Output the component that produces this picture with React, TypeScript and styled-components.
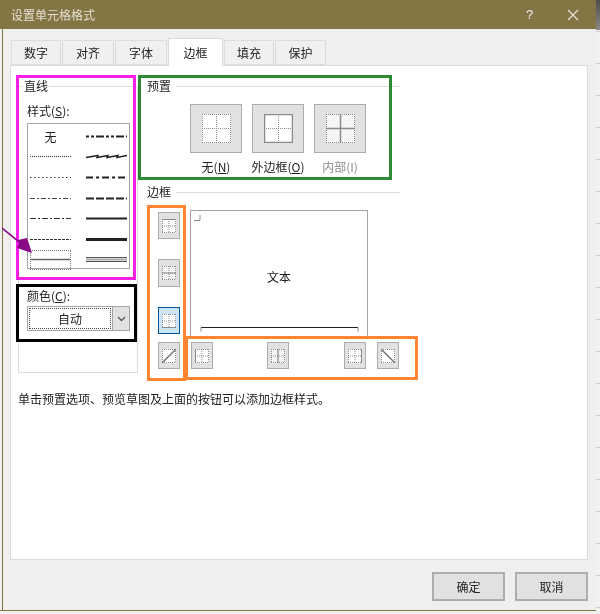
import React from "react";
import styled, { createGlobalStyle } from "styled-components";

const Global = createGlobalStyle`
  html, body { margin: 0; padding: 0; background: #e6e6e6; }
  * { box-sizing: border-box; }
`;

const Page = styled.div`
  position: relative;
  width: 600px;
  height: 614px;
  overflow: hidden;
  background: repeating-linear-gradient(180deg, #f1f1f1 0 31px, #cfcfcf 31px 32px);
  font-family: "Noto Sans CJK SC", "Noto Sans", sans-serif;
  font-size: 12px;
  color: #222;
  filter: blur(0.3px);
`;

const DarkEdge = styled.div`
  position: absolute;
  right: 0;
  top: 0;
  width: 4px;
  height: 30px;
  background: linear-gradient(180deg, #4d4d4d, #8a8a8a);
`;

const Dialog = styled.div`
  width: 596px;
  height: 611px;
  display: flex;
  flex-direction: column;
  background: #efefef;
  border-bottom: 1px solid #847545;
`;

const TitleBar = styled.div`
  height: 29px;
  flex: none;
  display: flex;
  align-items: center;
  padding: 0 17px 0 11px;
  background: #847545;
  color: #e4e0d2;
  font-size: 12px;
`;

const TitleText = styled.span`
  flex: 1;
`;

const Help = styled.span`
  width: 41px;
  font-size: 13px;
  font-family: "Liberation Sans", sans-serif;
  color: #eee;
`;

const Body = styled.div`
  flex: 1;
  display: flex;
  flex-direction: column;
  margin-left: 2px;
  padding: 0 8px 0 7px;
  border-left: 1px solid #847545;
`;

const Tabs = styled.div`
  display: flex;
  align-items: flex-end;
  height: 36px;
  padding-left: 1px;
  gap: 1px;
`;

const Tab = styled.div<{ $w: number; $active?: boolean }>`
  width: ${(p) => p.$w}px;
  height: ${(p) => (p.$active ? 28 : 25)}px;
  margin-bottom: ${(p) => (p.$active ? -1 : 0)}px;
  position: relative;
  display: flex;
  align-items: center;
  justify-content: center;
  background: ${(p) => (p.$active ? "#fff" : "#f0f0f0")};
  border: 1px solid #dcdcdc;
  border-bottom: ${(p) => (p.$active ? "none" : "1px solid #dcdcdc")};
  font-size: 12px;
`;

const Panel = styled.div`
  width: 578px;
  height: 495px;
  display: flex;
  flex-direction: column;
  padding: 12px 0 0 7px;
  background: #fff;
  border: 1px solid #dcdcdc;
`;

const Top = styled.div`
  display: flex;
`;

const LineGroup = styled.fieldset`
  width: 120px;
  height: 295px;
  margin: 0;
  padding: 0 6px 0 8px;
  border: 1px solid #dcdcdc;
  min-width: 0;
`;

const GroupLegend = styled.legend`
  margin-left: -4px;
  padding: 0 1px;
  line-height: 16px;
`;

const FieldLabel = styled.div`
  height: 16px;
  line-height: 16px;
  margin-top: 9px;
  margin-bottom: 4px;
`;

const ColorLabel = styled(FieldLabel)`
  margin-top: 19px;
  margin-bottom: 2px;
`;

const Underlined = styled.span`
  text-decoration: underline;
`;

const StyleList = styled.div`
  width: 103px;
  height: 146px;
  padding: 2px 2px;
  display: grid;
  grid-template-columns: 41px 41px;
  column-gap: 15px;
  grid-auto-rows: 20.6px;
  border: 1px solid #a5a5a5;
`;

const StyleCell = styled.div<{ $selected?: boolean }>`
  display: flex;
  align-items: center;
  justify-content: center;
  ${(p) => p.$selected && "border: 1px dotted #777;"}
`;

const ColorSelect = styled.div`
  width: 103px;
  height: 25px;
  display: flex;
  border: 1px solid #a5a5a5;
`;

const ColorValue = styled.div`
  flex: 1;
  margin: 1px;
  display: flex;
  align-items: center;
  justify-content: center;
  border: 1px dotted #444;
`;

const Arrow = styled.div`
  width: 17px;
  display: flex;
  align-items: center;
  justify-content: center;
  background: #e1e1e1;
  border-left: 1px solid #a5a5a5;
`;

const Right = styled.div`
  width: 253px;
  margin-left: 9px;
`;

const GroupHead = styled.div`
  display: flex;
  align-items: center;
  gap: 5px;
  height: 16px;
  line-height: 16px;
`;

const HeadRule = styled.div`
  flex: 1;
  height: 1px;
  background: #dcdcdc;
`;

const Presets = styled.div`
  display: flex;
  gap: 10px;
  margin: 10px 0 9px 43px;
`;

const Preset = styled.div<{ $muted?: boolean }>`
  width: 52px;
  display: flex;
  flex-direction: column;
  align-items: center;
  gap: 6px;
  white-space: nowrap;
  color: ${(p) => (p.$muted ? "#8a8a8a" : "#222")};
`;

const PresetButton = styled.div`
  width: 52px;
  height: 49px;
  display: flex;
  align-items: center;
  justify-content: center;
  background: #e1e1e1;
  border: 1px solid #adadad;
`;

const PresetLabel = styled.div`
  height: 16px;
  line-height: 16px;
`;

const Editor = styled.div`
  display: grid;
  grid-template-columns: 22px 178px;
  grid-template-rows: 132px 27px;
  column-gap: 10px;
  margin: 10px 0 0 11px;
`;

const SideButtons = styled.div`
  display: flex;
  flex-direction: column;
  padding-top: 2px;
  gap: 20px;
`;

const EdgeButton = styled.div<{ $active?: boolean; $h?: number }>`
  flex: none;
  width: 22px;
  height: ${(p) => p.$h ?? 27}px;
  display: flex;
  align-items: center;
  justify-content: center;
  background: ${(p) => (p.$active ? "#cce4f7" : "#e1e1e1")};
  border: 1px solid ${(p) => (p.$active ? "#005499" : "#adadad")};
`;

const Preview = styled.div`
  position: relative;
  height: 128px;
  display: flex;
  align-items: center;
  justify-content: center;
  padding-top: 4px;
  border: 1px solid #a5a5a5;
  border-bottom: none;
`;

const PreviewMarks = styled.svg`
  position: absolute;
  left: 0;
  top: 0;
`;

const BottomButtons = styled.div`
  display: flex;
  margin-left: 1px;
  width: 300px;
`;

const BottomGap = styled.div<{ $w: number }>`
  width: ${(p) => p.$w}px;
  flex: none;
`;

const HelpText = styled.div`
  margin-top: 18px;
  height: 16px;
  line-height: 16px;
`;

const Footer = styled.div`
  display: flex;
  justify-content: flex-end;
  gap: 10px;
  padding: 12px 0 0;
`;

const ActionButton = styled.div`
  width: 73px;
  height: 29px;
  display: flex;
  align-items: center;
  justify-content: center;
  background: #e1e1e1;
  border: 1px solid #adadad;
  outline: 1px solid #adadad;
  outline-offset: -2px;
`;

const Annotation = styled.div<{ $x: number; $y: number; $w: number; $h: number; $c: string }>`
  position: absolute;
  left: ${(p) => p.$x}px;
  top: ${(p) => p.$y}px;
  width: ${(p) => p.$w}px;
  height: ${(p) => p.$h}px;
  border: 3px solid ${(p) => p.$c};
  pointer-events: none;
`;

const PointerArrow = styled.svg`
  position: absolute;
  left: 0;
  top: 222px;
`;

type Dash = { w: number; d?: string; c?: string };

const Sample = ({ w, d, c = "#222" }: Dash) => (
  <svg width="41" height="7" viewBox="0 0 41 7">
    <line x1="0" y1="3.5" x2="41" y2="3.5" stroke={c} strokeWidth={w} strokeDasharray={d} />
  </svg>
);

const Double = () => (
  <svg width="41" height="7" viewBox="0 0 41 7">
    <line x1="0" y1="1.5" x2="41" y2="1.5" stroke="#555" strokeWidth="1" />
    <line x1="0" y1="5.5" x2="41" y2="5.5" stroke="#555" strokeWidth="1" />
    <line x1="0" y1="3.5" x2="41" y2="3.5" stroke="#aaa" strokeWidth="2" />
  </svg>
);

const Slant = () => (
  <svg width="41" height="7" viewBox="0 0 41 7">
    <path
      d="M0 4.5L12 2.5L11 4.5L22 2.5L21 4.5L32 2.5L31 4.5L41 2.5"
      stroke="#222"
      strokeWidth="1.4"
      fill="none"
    />
  </svg>
);

type Cell = {
  w?: number;
  h?: number;
  fill?: string;
  strong?: boolean;
  top?: boolean;
  bottom?: boolean;
  left?: boolean;
  right?: boolean;
  hmid?: boolean;
  vmid?: boolean;
  rise?: boolean;
  fall?: boolean;
};

const Glyph = ({ w = 14, h = 14, fill = "#fff", top, bottom, left, right, hmid, vmid, rise, fall, strong }: Cell) => {
  const dot = "#8c8c8c";
  const solid = "#8a8a8a";
  const sw = strong ? 1.5 : 1;
  const mx = w / 2;
  const my = h / 2;
  const diag = rise || fall;
  return (
    <svg width={w} height={h} viewBox={`0 0 ${w} ${h}`}>
      <rect x="0" y="0" width={w} height={h} fill={fill} />
      <g stroke={dot} strokeWidth="1" strokeDasharray="1 1" fill="none">
        <line x1="0" y1="0.5" x2={w} y2="0.5" />
        <line x1="0" y1={h - 0.5} x2={w} y2={h - 0.5} />
        <line x1="0.5" y1="0" x2="0.5" y2={h} />
        <line x1={w - 0.5} y1="0" x2={w - 0.5} y2={h} />
        {!diag && <line x1="0" y1={my} x2={w} y2={my} />}
        {!diag && <line x1={mx} y1="0" x2={mx} y2={h} />}
      </g>
      <g stroke={solid} strokeWidth={sw}>
        {top && <line x1="0" y1="0.5" x2={w} y2="0.5" />}
        {bottom && <line x1="0" y1={h - 0.5} x2={w} y2={h - 0.5} />}
        {left && <line x1="0.5" y1="0" x2="0.5" y2={h} />}
        {right && <line x1={w - 0.5} y1="0" x2={w - 0.5} y2={h} />}
        {hmid && <line x1="0" y1={my} x2={w} y2={my} />}
        {vmid && <line x1={mx} y1="0" x2={mx} y2={h} />}
      </g>
      <g stroke="#6f6f6f" strokeWidth="1.4">
        {rise && <line x1="0" y1={h} x2={w} y2="0" />}
        {fall && <line x1="0" y1="0" x2={w} y2={h} />}
      </g>
    </svg>
  );
};

const leftStyles: Dash[] = [
  { w: 1, d: "1 1", c: "#333" },
  { w: 1, d: "1.5 2.5", c: "#333" },
  { w: 1, d: "5 2 2 2", c: "#444" },
  { w: 1, d: "6 2 2 2", c: "#333" },
  { w: 1, d: "3 1", c: "#333" },
];

const rightStyles: (Dash | "slant")[] = [
  { w: 2, d: "3 2 3 2 8 2" },
  "slant",
  { w: 2, d: "7 3 3 3" },
  { w: 2, d: "8 2" },
  { w: 2 },
  { w: 3 },
];

export default function App() {
  return (
    <Page>
      <Global />
      <DarkEdge />
      <Dialog>
        <TitleBar>
          <TitleText>设置单元格格式</TitleText>
          <Help>?</Help>
          <svg width="12" height="12" viewBox="0 0 12 12">
            <path d="M1 1l10 10M11 1L1 11" stroke="#e8e4d8" strokeWidth="1.2" fill="none" />
          </svg>
        </TitleBar>
        <Body>
          <Tabs>
            <Tab $w={50}>数字</Tab>
            <Tab $w={52}>对齐</Tab>
            <Tab $w={52}>字体</Tab>
            <Tab $w={55} $active>边框</Tab>
            <Tab $w={50}>填充</Tab>
            <Tab $w={51}>保护</Tab>
          </Tabs>
          <Panel>
            <Top>
              <LineGroup>
                <GroupLegend>直线</GroupLegend>
                <FieldLabel>样式(<Underlined>S</Underlined>):</FieldLabel>
                <StyleList>
                  <StyleCell>无</StyleCell>
                  <StyleCell><Sample w={2} d="3 2 3 2 8 2" /></StyleCell>
                  {leftStyles.map((s, i) => {
                    const r = rightStyles[i + 1];
                    return (
                      <React.Fragment key={i}>
                        <StyleCell><Sample {...s} /></StyleCell>
                        <StyleCell>{r === "slant" ? <Slant /> : <Sample {...(r as Dash)} />}</StyleCell>
                      </React.Fragment>
                    );
                  })}
                  <StyleCell $selected><Sample w={1.5} c="#666" /></StyleCell>
                  <StyleCell><Double /></StyleCell>
                </StyleList>
                <ColorLabel>颜色(<Underlined>C</Underlined>):</ColorLabel>
                <ColorSelect>
                  <ColorValue>自动</ColorValue>
                  <Arrow>
                    <svg width="9" height="6" viewBox="0 0 9 6">
                      <path d="M1 1l3.5 3.5L8 1" stroke="#555" strokeWidth="1.3" fill="none" />
                    </svg>
                  </Arrow>
                </ColorSelect>
              </LineGroup>
              <Right>
                <GroupHead>预置<HeadRule /></GroupHead>
                <Presets>
                  <Preset>
                    <PresetButton><Glyph w={29} h={29} /></PresetButton>
                    <PresetLabel>无(<Underlined>N</Underlined>)</PresetLabel>
                  </Preset>
                  <Preset>
                    <PresetButton><Glyph w={29} h={29} top bottom left right strong /></PresetButton>
                    <PresetLabel>外边框(<Underlined>O</Underlined>)</PresetLabel>
                  </Preset>
                  <Preset $muted>
                    <PresetButton><Glyph w={29} h={29} fill="#f5f5f5" hmid vmid strong /></PresetButton>
                    <PresetLabel>内部(I)</PresetLabel>
                  </Preset>
                </Presets>
                <GroupHead>边框<HeadRule /></GroupHead>
                <Editor>
                  <SideButtons>
                    <EdgeButton><Glyph top /></EdgeButton>
                    <EdgeButton $h={28}><Glyph fill="#f5f5f5" hmid /></EdgeButton>
                    <EdgeButton $active><Glyph bottom /></EdgeButton>
                  </SideButtons>
                  <Preview>
                    文本
                    <PreviewMarks width="176" height="127" viewBox="0 0 176 127">
                      <g stroke="#888" strokeWidth="1" fill="none">
                        <path d="M3 9.5h6V4" />
                        <path d="M10 116.5h157" stroke="#222" strokeWidth="1.2" />
                        <path d="M10 116.5v4M167 116.5v4" />
                      </g>
                    </PreviewMarks>
                  </Preview>
                  <EdgeButton><Glyph rise /></EdgeButton>
                  <BottomButtons>
                    <EdgeButton><Glyph left /></EdgeButton>
                    <BottomGap $w={54} />
                    <EdgeButton><Glyph fill="#f5f5f5" vmid /></EdgeButton>
                    <BottomGap $w={55} />
                    <EdgeButton><Glyph right /></EdgeButton>
                    <BottomGap $w={11} />
                    <EdgeButton><Glyph fall /></EdgeButton>
                  </BottomButtons>
                </Editor>
              </Right>
            </Top>
            <HelpText>单击预置选项、预览草图及上面的按钮可以添加边框样式。</HelpText>
          </Panel>
          <Footer>
            <ActionButton>确定</ActionButton>
            <ActionButton>取消</ActionButton>
          </Footer>
        </Body>
      </Dialog>
      <Annotation $x={16} $y={75} $w={120} $h={205} $c="#f91fe8" />
      <Annotation $x={16} $y={284} $w={121} $h={58} $c="#000" />
      <Annotation $x={138} $y={75} $w={254} $h={105} $c="#2f8a36" />
      <Annotation $x={147} $y={205} $w={39} $h={176} $c="#ff8533" />
      <Annotation $x={185} $y={336} $w={233} $h={44} $c="#ff8533" />
      <PointerArrow width="40" height="40" viewBox="0 0 40 40">
        <path d="M2 5L18 18L27 16L32 31L17 26L19 21L2 7Z" fill="#8a0a8a" />
      </PointerArrow>
    </Page>
  );
}
